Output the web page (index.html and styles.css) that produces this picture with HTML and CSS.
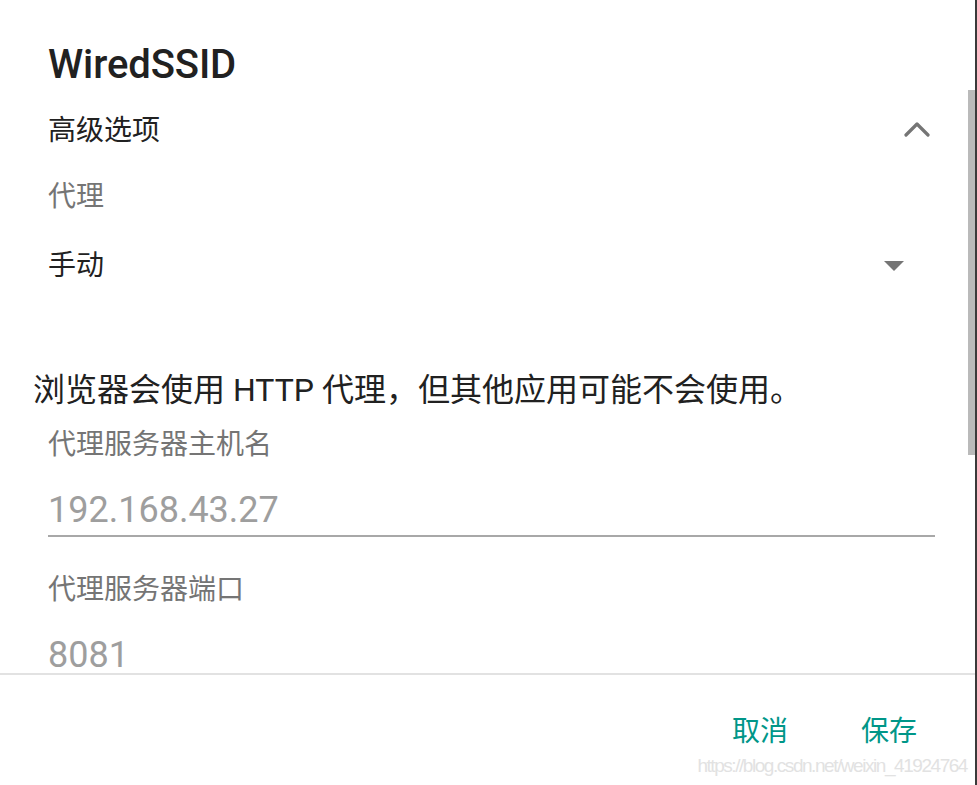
FILE: index.html
```html
<!DOCTYPE html>
<html lang="zh-CN">
<head>
<meta charset="utf-8">
<title>WiredSSID</title>
<link rel="stylesheet" href="styles.css">
</head>
<body>
<div class="dialog">
  <div class="content">
    <div class="title">WiredSSID</div>
    <div class="row section">
      <span class="section-text">高级选项</span>
      <svg class="chevron" width="26" height="16" viewBox="0 0 26 16"><path d="M2 14 L13 3 L24 14" fill="none" stroke="#757575" stroke-width="3.2" stroke-linecap="round" stroke-linejoin="round"/></svg>
    </div>
    <div class="label first">代理</div>
    <div class="row select">
      <span class="select-text">手动</span>
      <svg class="caret" width="20" height="10" viewBox="0 0 20 10"><path d="M0 0 L20 0 L10 10 Z" fill="#757575"/></svg>
    </div>
    <div class="message">浏览器会使用 HTTP 代理，但其他应用可能不会使用。</div>
    <div class="label">代理服务器主机名</div>
    <div class="input underlined">192.168.43.27</div>
    <div class="label">代理服务器端口</div>
    <div class="input last">8081</div>
    <div class="scrollbar"></div>
  </div>
  <div class="footer">
    <span class="btn">取消</span>
    <span class="btn">保存</span>
    <div class="watermark">https://blog.csdn.net/weixin_41924764</div>
  </div>
</div>
</body>
</html>
```
FILE: styles.css
```css
html, body {
  margin: 0;
  padding: 0;
  background: #ffffff;
}
body {
  font-family: Roboto, "Noto Sans CJK SC", sans-serif;
  color: #212121;
}
.dialog {
  width: 977px;
  height: 785px;
  box-sizing: border-box;
  border-right: 2px solid #3a3a3a;
  display: flex;
  flex-direction: column;
  overflow: hidden;
  position: relative;
}
.content {
  height: 673px;
  flex: none;
  overflow: hidden;
  position: relative;
  padding-top: 41px;
  box-sizing: border-box;
}
.title {
  height: 48px;
  line-height: 48px;
  padding-left: 48px;
  font-size: 40px;
  font-weight: 500;
  color: #212121;
  letter-spacing: -0.1px;
}
.row {
  display: flex;
  align-items: center;
  justify-content: space-between;
  padding-left: 48px;
}
.section {
  margin-top: 18px;
  height: 48px;
  padding-right: 45px;
}
.section-text, .select-text {
  font-size: 28px;
  line-height: 48px;
  color: #212121;
}
.chevron {
  display: block;
  margin-top: -4px;
}
.label {
  height: 40px;
  line-height: 40px;
  padding-left: 48px;
  font-size: 28px;
  color: #757575;
}
.label.first {
  margin-top: 22px;
}
.select {
  margin-top: 25px;
  height: 48px;
  padding-right: 71px;
}
.caret {
  display: block;
}
.message {
  margin-top: 80px;
  height: 40px;
  line-height: 40px;
  padding-left: 33px;
  font-size: 32px;
  color: #212121;
}
.message + .label {
  margin-top: 15px;
}
.input {
  margin-left: 48px;
  width: 887px;
  height: 50px;
  line-height: 50px;
  font-size: 36px;
  color: #9e9e9e;
  margin-top: 20px;
}
.input.last {
  height: 36px;
  line-height: 36px;
  margin-top: 27px;
}
.underlined {
  border-bottom: 2px solid #a8a8a8;
  margin-bottom: 33px;
}
.scrollbar {
  position: absolute;
  left: 968px;
  top: 90px;
  width: 7px;
  height: 365px;
  background: #bababa;
}
.footer {
  flex: 1;
  border-top: 2px solid #e2e2e2;
  position: relative;
  display: flex;
  justify-content: flex-end;
  align-items: flex-start;
  gap: 73px;
  padding: 33px 58px 0 0;
}
.btn {
  font-size: 28px;
  line-height: 48px;
  color: #009688;
}
.watermark {
  position: absolute;
  right: 8px;
  bottom: 8px;
  font-family: "Liberation Sans", sans-serif;
  font-size: 19px;
  color: #e2e2e2;
  letter-spacing: -1.45px;
}
```
